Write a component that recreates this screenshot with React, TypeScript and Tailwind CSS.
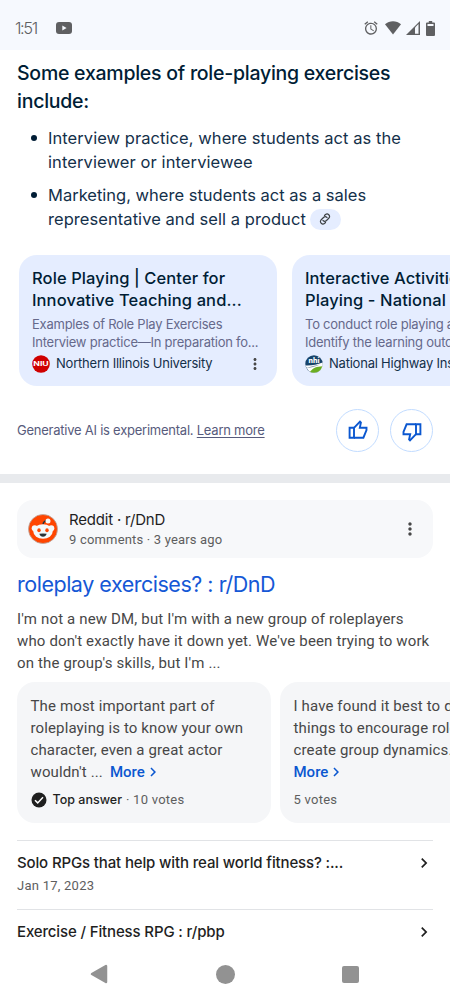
import React from 'react';
import { MdAlarm, MdMoreVert, MdChevronRight } from 'react-icons/md';

const sans = "font-['Inter','Liberation_Sans',sans-serif]";
const roboto = "font-['Roboto','Liberation_Sans',sans-serif]";

const StatusBar: React.FC = () => (
  <div className="h-[50px] shrink-0 bg-[#f6f9fe] flex items-center pt-[6px] pl-[15px] pr-[15px] text-[#5f6062]">
    <span className="w-[41px] text-[16.5px] leading-5 font-light tracking-[-1.4px]">1:51</span>
    <svg className="w-4 h-3" viewBox="0 0 16 12">
      <rect width="16" height="12" rx="3" fill="currentColor" />
      <path d="M6.3 3.5v5l4.3-2.5z" fill="#f6f9fe" />
    </svg>
    <div className="ml-auto flex items-center">
      <MdAlarm className="w-4 h-4" />
      <svg className="w-4 h-[14px] ml-[6px]" viewBox="0 0 16 14">
        <path d="M0 3.2C4.5-.7 11.5-.7 16 3.2L8 13.5z" fill="currentColor" />
      </svg>
      <svg className="w-[14px] h-[14px] ml-[5px]" viewBox="0 0 14 14">
        <path d="M0 14 14 0v14z" fill="currentColor" />
        <path d="M9 6.500 12.500 3v9.700H9z" fill="#f6f9fe" />
      </svg>
      <svg className="w-[9px] h-[15px] ml-[6px]" viewBox="0 0 9 15">
        <path d="M2.8 0h3.4v1.5H8A1 1 0 0 1 9 2.5V14a1 1 0 0 1-1 1H1a1 1 0 0 1-1-1V2.500a1 1 0 0 1 1-1h1.800z" fill="currentColor" />
        <path d="M1.500 3h6v2h-6z" fill="#f6f9fe" />
      </svg>
    </div>
  </div>
);

const NiuIcon: React.FC = () => (
  <svg className="w-[18px] h-[18px] shrink-0" viewBox="0 0 18 18">
    <circle cx="9" cy="9" r="8.800" fill="#cf0000" />
    <text x="9" y="11.200" fontSize="6" fontWeight="700" textAnchor="middle" textLength="15.500" lengthAdjust="spacingAndGlyphs" fill="#fff">
      NIU
    </text>
  </svg>
);

const NhiIcon: React.FC = () => (
  <svg className="w-[18px] h-[18px] shrink-0" viewBox="0 0 18 18">
    <circle cx="9" cy="9" r="8.700" fill="#17446b" />
    <path d="M.3 10.500C6 11 12 9.500 17.600 7.500A8.700 8.700 0 0 1 3.500 15.700z" fill="#fff" />
    <path d="M5 16.800C8 12.500 12 11.500 17.300 11.200A8.700 8.700 0 0 1 5 16.800z" fill="#6bae23" />
    <path d="M1 13c5 0 9-1.500 14-3.500-5 1-9 2-14 3.500z" fill="#8a9aa5" />
    <text x="9" y="8.300" fontSize="7" fontWeight="800" textAnchor="middle" fill="#fff">
      nhi
    </text>
  </svg>
);

const RedditIcon: React.FC = () => (
  <svg className="w-[30px] h-[30px] shrink-0" viewBox="0 0 30 30">
    <circle cx="15" cy="15" r="14.500" fill="#ff4500" stroke="#b8a9a3" strokeWidth=".8" />
    <path d="M15 10.500Q15.500 7 19 6.500" fill="none" stroke="#263238" strokeWidth="1.400" />
    <circle cx="20" cy="7" r="2.500" fill="#f4f8f9" />
    <circle cx="6.700" cy="14.300" r="3" fill="#f4f8f9" />
    <circle cx="23.300" cy="14.300" r="3" fill="#f4f8f9" />
    <ellipse cx="15" cy="17.500" rx="9.700" ry="7.300" fill="#f4f8f9" />
    <ellipse cx="11" cy="16.300" rx="1.700" ry="2" fill="#ff4500" />
    <ellipse cx="19" cy="16.300" rx="1.700" ry="2" fill="#ff4500" />
    <path d="M11.300 19.800q3.700-.8 7.400 0-1 3-3.700 3t-3.700-3z" fill="#263238" />
  </svg>
);

const ThumbIcon: React.FC<{ className?: string }> = ({ className = '' }) => (
  <svg className={`w-5 h-5 ${className}`} viewBox="0 0 20 20" fill="none" stroke="currentColor" strokeWidth="1.900">
    <path d="M1.600 7.800H6v9.900H1.600z" />
    <path d="M6 7.800 12 1.700l.9.900-1.100 5.200h6.700v2.300l-3.100 7.600H6" />
  </svg>
);

interface SourceCardProps {
  title: React.ReactNode;
  description: React.ReactNode;
  source: string;
  icon: React.ReactNode;
}

const SourceCard: React.FC<SourceCardProps> = ({ title, description, source, icon }) => (
  <div className="w-[258px] h-[131px] shrink-0 rounded-[18px] bg-[#e5edff] pl-[13px] pr-[13px] pt-3 whitespace-nowrap">
    <div className="text-[16.5px] leading-[22px] tracking-[0.1px] font-medium text-[#001d35]">{title}</div>
    <div className="mt-1 text-[13px] leading-[18px] tracking-[-0.24px] text-[#65698b]">{description}</div>
    <div className="mt-1 flex items-center h-[18px] text-[13px] text-[#14304a]">
      {icon}
      <span className="ml-[6px] tracking-[-0.22px]">{source}</span>
      <MdMoreVert className="ml-auto w-[18px] h-[18px] text-[#474747]" />
    </div>
  </div>
);

const More: React.FC = () => (
  <span className="inline-flex items-center font-medium tracking-normal text-[#0b57d0]">
    More
    <MdChevronRight className="w-[18px] h-[18px] ml-[-1px]" />
  </span>
);

const CommentCard: React.FC<{ children: React.ReactNode; footer: React.ReactNode }> = ({ children, footer }) => (
  <div className="w-[254px] h-[141px] shrink-0 rounded-[18px] bg-[#f5f6f8] pl-[13.5px] pt-[13px] whitespace-nowrap">
    <div className="text-[15px] leading-[22px] tracking-[0.13px] text-[#474747]">{children}</div>
    <div className="mt-[7px] h-5 flex items-center text-[13px] tracking-[0.25px] text-[#5e5e5e]">{footer}</div>
  </div>
);

const ResultRow: React.FC<{ title: React.ReactNode; date?: string }> = ({ title, date }) => (
  <div className="mx-[17px] h-[69px] shrink-0 border-t border-[#e1e3e6] pt-[10px]">
    <div className="flex items-center justify-between h-6 text-[15px] tracking-[-0.14px] font-medium text-[#1f1f1f] whitespace-nowrap">
      <span>{title}</span>
      <MdChevronRight className="w-5 h-5 mr-[-1px]" />
    </div>
    {date && <div className={`${roboto} text-[13px] leading-[22px] tracking-[0.25px] text-[#5e5e5e]`}>{date}</div>}
  </div>
);

export default function App() {
  return (
    <div className={`${sans} w-[450px] h-[1000px] overflow-hidden bg-white flex flex-col`}>
      <StatusBar />

      {/* AI overview */}
      <div className="h-[424px] shrink-0 pt-[9px] flex flex-col">
        <h2 className="px-[17px] text-[19.5px] leading-7 tracking-[-0.25px] font-medium text-[#001d35] whitespace-nowrap">
          Some examples of role-playing exercises
          <br />
          include:
        </h2>
        <ul className="mt-[11px] pl-[31px] flex flex-col gap-[9px] text-[16.5px] leading-6 text-[#14304a] whitespace-nowrap">
          <li className="flex">
            <span className="mt-[9px] mr-[11px] w-[6px] h-[6px] rounded-full bg-[#001d35]" />
            <div>
              <span className="tracking-[0.06px]">Interview practice, where students act as the</span>
              <br />
              <span className="tracking-[0.1px]">interviewer or interviewee</span>
            </div>
          </li>
          <li className="flex">
            <span className="mt-[9px] mr-[11px] w-[6px] h-[6px] rounded-full bg-[#001d35]" />
            <div>
              Marketing, where students act as a sales
              <br />
              <span className="flex items-center tracking-[0.06px]">
                representative and sell a product
                <span className="ml-1 w-[31px] h-[21px] rounded-full bg-[#e5edff] flex items-center justify-center">
                  <svg className="w-3 h-3 text-[#3c4043]" viewBox="0 0 24 24" fill="none" stroke="currentColor" strokeWidth="2.300" strokeLinecap="round">
                    <path d="M11 5l2-2a5 5 0 0 1 7 7l-5 5a5 5 0 0 1-7 0M13 19l-2 2a5 5 0 0 1-7-7l5-5a5 5 0 0 1 7 0" />
                  </svg>
                </span>
              </span>
            </div>
          </li>
        </ul>

        <div className="mt-6 pl-[19px] flex gap-[15px] overflow-hidden">
          <SourceCard
            title={<>Role Playing | Center for<br />Innovative Teaching and...</>}
            description={<>Examples of Role Play Exercises<br />Interview practice—In preparation fo...</>}
            source="Northern Illinois University"
            icon={<NiuIcon />}
          />
          <SourceCard
            title={<>Interactive Activities: Role<br />Playing - National Highway</>}
            description={<>To conduct role playing activities<br />Identify the learning outcomes</>}
            source="National Highway Institute"
            icon={<NhiIcon />}
          />
        </div>

        <div className="mt-[23px] px-[17px] flex items-center text-[13px] tracking-[-0.24px] text-[#575b7c]">
          <span>
            Generative AI is experimental. <a className="underline underline-offset-2">Learn more</a>
          </span>
          <div className="ml-auto flex gap-[11px] text-[#0b57d0]">
            <button className="w-[43px] h-[43px] rounded-full border border-[#c2dcff] flex items-center justify-center pb-[2px]">
              <ThumbIcon />
            </button>
            <button className="w-[43px] h-[43px] rounded-full border border-[#c2dcff] flex items-center justify-center pt-[2px]">
              <ThumbIcon className="rotate-180" />
            </button>
          </div>
        </div>
      </div>

      <div className="h-[9px] shrink-0 bg-[#e8eaed]" />

      {/* Reddit result */}
      <div className="mt-[17px] mx-[17px] h-[58px] shrink-0 rounded-[16px] bg-[#f7f8fa] flex items-center pl-[11px] pr-[13px]">
        <RedditIcon />
        <div className="ml-[11px] pt-[2px]">
          <div className="text-[15px] leading-5 tracking-[-0.2px] text-[#1f1f1f]">Reddit · r/DnD</div>
          <div className={`${roboto} text-[13px] leading-5 tracking-[0.18px] text-[#5e5e5e]`}>9 comments · 3 years ago</div>
        </div>
        <MdMoreVert className="ml-auto w-5 h-5 text-[#474747]" />
      </div>
      <h3 className="mt-3 px-[17px] text-[21.5px] leading-[29px] tracking-[-0.48px] text-[#1558d6]">roleplay exercises? : r/DnD</h3>
      <p className={`${roboto} mt-[9px] px-[17px] text-[15px] leading-[22px] tracking-[0.15px] text-[#474747] whitespace-nowrap`}>
        I'm not a new DM, but I'm with a new group of roleplayers
        <br />
        who don't exactly have it down yet. We've been trying to work
        <br />
        on the group's skills, but I'm ...
      </p>

      <div className={`${roboto} mt-2 pl-[17px] flex gap-[9px] shrink-0 overflow-hidden`}>
        <CommentCard
          footer={
            <>
              <svg className="w-4 h-4 mr-[6px]" viewBox="0 0 16 16">
                <circle cx="8" cy="8" r="7.500" fill="#1f1f1f" />
                <path d="M4 8.200l2.700 2.700L12 5.300" fill="none" stroke="#fff" strokeWidth="1.500" />
              </svg>
              <span className={`${sans} font-medium text-[12.5px] tracking-normal text-[#1f1f1f]`}>Top answer</span>
              <span className="ml-1">· 10 votes</span>
            </>
          }
        >
          The most important part of
          <br />
          roleplaying is to know your own
          <br />
          character, even a great actor
          <div className="flex h-[22px]">
            <span className="mr-[7px]">wouldn't ...</span>
            <More />
          </div>
        </CommentCard>
        <CommentCard footer="5 votes">
          I have found it best to do little
          <br />
          things to encourage role play
          <br />
          create group dynamics...
          <div className="flex h-[22px]">
            <More />
          </div>
        </CommentCard>
      </div>

      <div className="mt-[17px] h-[111px] shrink-0 overflow-hidden">
        <ResultRow title="Solo RPGs that help with real world fitness? :..." date="Jan 17, 2023" />
        <ResultRow title="Exercise / Fitness RPG : r/pbp" />
      </div>

      {/* System navigation */}
      <div className="h-[49px] shrink-0 flex items-center justify-between pl-[90px] pr-[91px] pb-[3px] text-[#929292]">
        <svg className="w-[18px] h-5" viewBox="0 0 18 20">
          <path d="M16 2v16L2 10z" fill="currentColor" stroke="currentColor" strokeWidth="2.500" strokeLinejoin="round" />
        </svg>
        <div className="w-[19px] h-[19px] rounded-full bg-current" />
        <div className="w-[17px] h-[17px] rounded-[2px] bg-current" />
      </div>
    </div>
  );
}
